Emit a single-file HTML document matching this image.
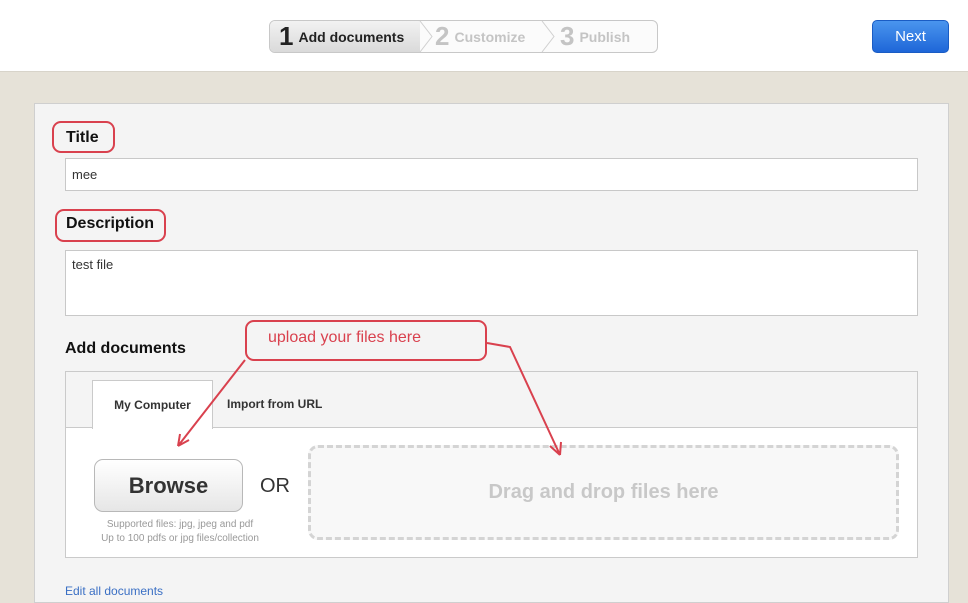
<!DOCTYPE html>
<html><head><meta charset="utf-8"><style>
*{box-sizing:border-box;margin:0;padding:0}
body{width:968px;height:588px;overflow:hidden;background:#e6e2d8;font-family:"Liberation Sans",Arial,sans-serif;position:relative}
.hdr{position:absolute;left:0;top:0;width:968px;height:72px;background:#fff;border-bottom:1px solid #d8d4ca}
.steps{position:absolute;left:269px;top:20px;width:389px;height:33px;border:1px solid #c8c8c8;border-radius:6px;background:#fbfbfb;overflow:hidden}
.s1{position:absolute;left:0;top:0;width:150px;height:31px;background:linear-gradient(#f2f2f2,#dadada)}
.st{position:absolute;top:0;height:31px;line-height:31px;font-weight:bold;font-size:14px;white-space:nowrap}
.st b{font-size:26px;vertical-align:-3px;margin-right:5px}
.next{position:absolute;left:872px;top:20px;width:77px;height:33px;border-radius:5px;background:linear-gradient(#4a95ee,#1e66d8);border:1px solid #1a5cc4;color:#fff;font-size:15px;text-align:center;line-height:31px}
.panel{position:absolute;left:34px;top:103px;width:915px;height:500px;background:#f4f4f4;border:1px solid #cfcfcf}
.lbl{position:absolute;font-weight:bold;font-size:16px;color:#111}
.inp{position:absolute;background:#fff;border:1px solid #c8c8c8;font-size:13px;color:#333;padding:0 6px}
.red{position:absolute;border:2px solid #d9414e;border-radius:9px}
.box{position:absolute;left:65px;top:371px;width:853px;height:187px;border:1px solid #cacaca;background:#fff}
.tabbar{position:absolute;left:0;top:0;width:851px;height:56px;background:#f4f4f4;border-bottom:1px solid #cacaca}
.tab{position:absolute;left:26px;top:8px;width:121px;height:49px;background:#fff;border:1px solid #cacaca;border-bottom:none;font-size:12px;font-weight:bold;color:#333;text-align:center;line-height:49px}
.browse{position:absolute;left:94px;top:459px;width:149px;height:53px;border:1px solid #b8b8b8;border-radius:9px;background:linear-gradient(#fff,#e6e6e6);font-weight:bold;font-size:22px;color:#333;text-align:center;line-height:51px}
.drop{position:absolute;left:308px;top:445px;width:591px;height:95px;border:3px dashed #d4d4d4;border-radius:10px;background:#f8f8f8;color:#c8c8c8;font-weight:bold;font-size:20px;text-align:center;line-height:89px}
</style></head><body>
<div class="hdr">
<div class="steps">
<div class="s1"></div>
<div class="st" style="left:9px;color:#222"><b>1</b>Add documents</div>
<div class="st" style="left:165px;color:#c4c4c4"><b>2</b>Customize</div>
<div class="st" style="left:290px;color:#c4c4c4"><b>3</b>Publish</div>
<svg style="position:absolute;left:0;top:0" width="389" height="31"><path d="M150 0 L162 15.5 L150 31" fill="none" stroke="#d0d0d0"/><path d="M272 0 L284 15.5 L272 31" fill="none" stroke="#d0d0d0"/></svg>
</div>
<div class="next">Next</div>
</div>
<div class="panel"></div>
<div class="lbl" style="left:66px;top:129px">Title</div>
<div class="red" style="left:52px;top:121px;width:63px;height:32px"></div>
<div class="inp" style="left:65px;top:158px;width:853px;height:33px;line-height:31px">mee</div>
<div class="lbl" style="left:66px;top:215px">Description</div>
<div class="red" style="left:55px;top:209px;width:111px;height:33px"></div>
<div class="inp" style="left:65px;top:250px;width:853px;height:66px;padding-top:6px">test file</div>
<div class="lbl" style="left:65px;top:340px">Add documents</div>
<div class="red" style="left:245px;top:320px;width:242px;height:41px;background:#f4f4f4"></div>
<div style="position:absolute;left:268px;top:329px;font-size:16px;color:#d9414e">upload your files here</div>
<div class="box"><div class="tabbar"></div><div class="tab">My Computer</div>
<div style="position:absolute;left:161px;top:8px;line-height:49px;font-size:12px;font-weight:bold;color:#333">Import from URL</div></div>
<div class="browse">Browse</div>
<div style="position:absolute;left:260px;top:475px;font-size:20px;color:#333">OR</div>
<div style="position:absolute;left:80px;top:518px;width:200px;text-align:center;font-size:10px;color:#999;line-height:14px">Supported files: jpg, jpeg and pdf<br>Up to 100 pdfs or jpg files/collection</div>
<div class="drop">Drag and drop files here</div>
<div style="position:absolute;left:65px;top:584px;font-size:12px;color:#3a6fc4">Edit all documents</div>
<svg style="position:absolute;left:0;top:0" width="968" height="588"><g fill="none" stroke="#d9414e" stroke-width="2"><path d="M245 360 L178 446 M178 446 L180 434 M178 446 L189 440"/><path d="M487 343 L510 347 L560 455 M560 455 L550 446 M560 455 L561 442"/></g></svg>
</body></html>
